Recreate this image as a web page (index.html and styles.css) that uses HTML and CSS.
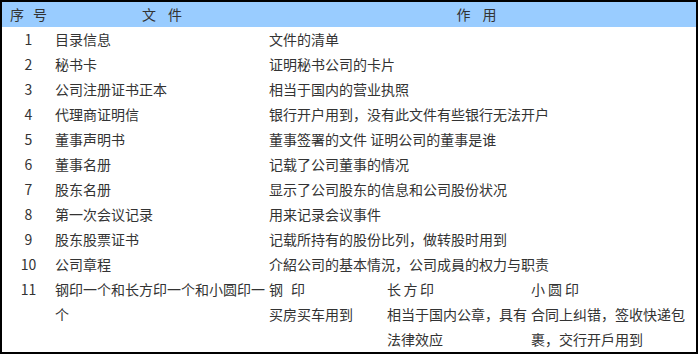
FILE: index.html
```html
<!DOCTYPE html>
<html lang="zh-CN">
<head>
<meta charset="utf-8">
<link rel="stylesheet" href="styles.css">
</head>
<body>
<div class="table">
  <div class="head">
    <div class="hc c1"><span>序</span><span>号</span></div>
    <div class="hc c2 wide"><span>文</span><span>件</span></div>
    <div class="hc c3 wide"><span>作</span><span>用</span></div>
  </div>
  <div class="row"><div class="num">1</div><div class="file">目录信息</div><div class="use">文件的清单</div></div>
  <div class="row"><div class="num">2</div><div class="file">秘书卡</div><div class="use">证明秘书公司的卡片</div></div>
  <div class="row"><div class="num">3</div><div class="file">公司注册证书正本</div><div class="use">相当于国内的营业执照</div></div>
  <div class="row"><div class="num">4</div><div class="file">代理商证明信</div><div class="use">银行开户用到，没有此文件有些银行无法开户</div></div>
  <div class="row"><div class="num">5</div><div class="file">董事声明书</div><div class="use">董事签署的文件 证明公司的董事是谁</div></div>
  <div class="row"><div class="num">6</div><div class="file">董事名册</div><div class="use">记载了公司董事的情况</div></div>
  <div class="row"><div class="num">7</div><div class="file">股东名册</div><div class="use">显示了公司股东的信息和公司股份状况</div></div>
  <div class="row"><div class="num">8</div><div class="file">第一次会议记录</div><div class="use">用来记录会议事件</div></div>
  <div class="row"><div class="num">9</div><div class="file">股东股票证书</div><div class="use">记载所持有的股份比列，做转股时用到</div></div>
  <div class="row"><div class="num">10</div><div class="file">公司章程</div><div class="use">介紹公司的基本情況，公司成員的权力与职责</div></div>
  <div class="row"><div class="num">11</div><div class="file">钢印一个和长方印一个和小圆印一个</div>
    <div class="use seals">
      <div class="seal s1"><div class="st g1"><span>钢</span><span>印</span></div><div>买房买车用到</div></div>
      <div class="seal s2"><div class="st g2"><span>长</span><span>方</span><span>印</span></div><div>相当于国内公章，具有法律效应</div></div>
      <div class="seal s3"><div class="st g3"><span>小</span><span>圆</span><span>印</span></div><div>合同上纠错，签收快递包裹，交行开戶用到</div></div>
    </div>
  </div>
</div>
</body>
</html>
```
FILE: styles.css
```css
html, body {
  margin: 0;
  padding: 0;
  background: #ffffff;
}
body {
  font-family: "Noto Sans CJK SC", "Noto Sans", sans-serif;
  font-size: 14px;
  color: #333333;
}
.table {
  width: 698px;
  height: 354px;
  box-sizing: border-box;
  border: 2px solid #000000;
  background: #ffffff;
  overflow: hidden;
}
.head {
  display: grid;
  grid-template-columns: 53px 214px 1fr;
  height: 25px;
  background: #99ccff;
  line-height: 25px;
}
.hc {
  display: flex;
  justify-content: center;
  gap: 9px;
}
.hc.wide {
  gap: 12px;
}
.hc.c3 {
  padding-right: 12px;
}
.row {
  display: grid;
  grid-template-columns: 53px 214px 1fr;
  line-height: 25px;
}
.num {
  text-align: center;
  font-family: "Noto Sans CJK SC", sans-serif;
}
.file {
  padding-right: 2px;
}
.seals {
  display: grid;
  grid-template-columns: 118px 144px 1fr;
}
.seal {
  min-width: 0;
}
.st {
  display: flex;
}
.g1 {
  gap: 8px;
}
.g2 {
  gap: 2.5px;
}
.g3 {
  gap: 3px;
}
.s3 {
  padding-right: 6px;
}
```
